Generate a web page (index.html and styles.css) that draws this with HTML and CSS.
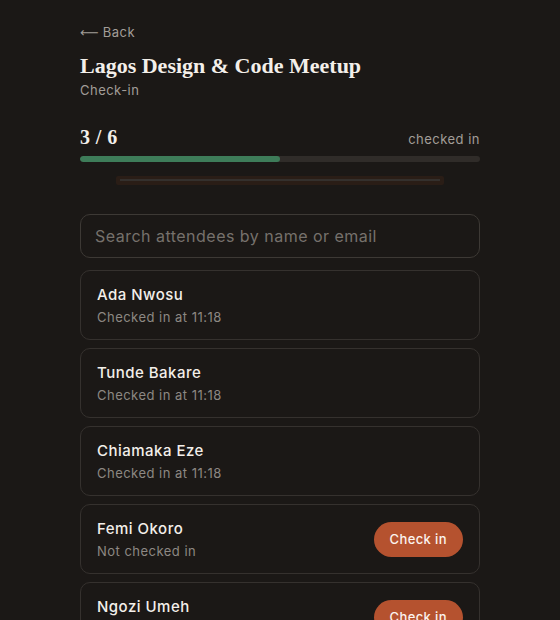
FILE: index.html
```html
<!DOCTYPE html>
<html lang="en">
<head>
  <meta charset="utf-8">
  <title>Check-in</title>
  <link rel="stylesheet" href="styles.css">
</head>
<body>
<main class="page">
  <a class="back" href="#"><span class="arrow">&#x27F5;</span> Back</a>
  <h1 class="title">Lagos Design &amp; Code Meetup</h1>
  <div class="subtitle">Check-in</div>

  <div class="progress-head">
    <span class="count">3 / 6</span>
    <span class="count-label">checked in</span>
  </div>
  <div class="track"><div class="fill" style="width: 50%"></div></div>
  <div class="ghost"><div class="ghost-line"></div></div>

  <input class="search" type="text" placeholder="Search attendees by name or email">

  <ul class="list">
    <li class="card">
      <div><div class="name">Ada Nwosu</div><div class="status">Checked in at 11:18</div></div>
    </li>
    <li class="card">
      <div><div class="name">Tunde Bakare</div><div class="status">Checked in at 11:18</div></div>
    </li>
    <li class="card">
      <div><div class="name">Chiamaka Eze</div><div class="status">Checked in at 11:18</div></div>
    </li>
    <li class="card">
      <div><div class="name">Femi Okoro</div><div class="status">Not checked in</div></div>
      <button class="btn">Check in</button>
    </li>
    <li class="card">
      <div><div class="name">Ngozi Umeh</div><div class="status">Not checked in</div></div>
      <button class="btn">Check in</button>
    </li>
    <li class="card">
      <div><div class="name">Segun Adeyemi</div><div class="status">Not checked in</div></div>
      <button class="btn">Check in</button>
    </li>
  </ul>
</main>
</body>
</html>
```

FILE: styles.css
```css
body {
    margin: 0;
    background-color: #1b1816;
    color: #f3efea;
    font-family: Inter, "Liberation Sans", sans-serif;
    letter-spacing: 0.03em;
}

.page {
    width: 400px;
    margin: 0 auto;
    padding-top: 21px;
}

.back {
    display: inline-block;
    color: #a29d98;
    font-size: 13px;
    line-height: 18px;
    text-decoration: none;
}

.back .arrow {
    font-family: "DejaVu Sans", sans-serif;
    letter-spacing: 0;
}

.title {
    margin: 11px 0 0;
    font-family: "Liberation Serif", serif;
    font-weight: bold;
    font-size: 22px;
    line-height: 26px;
    letter-spacing: 0;
}

.subtitle {
    margin-top: 2px;
    color: #a29d98;
    font-size: 13px;
    line-height: 18px;
}

.progress-head {
    margin-top: 25px;
    display: flex;
    justify-content: space-between;
    align-items: baseline;
}

.count {
    font-family: "Liberation Serif", serif;
    font-weight: bold;
    font-size: 20px;
    line-height: 26px;
    letter-spacing: 0.02em;
}

.count-label {
    color: #a29d98;
    font-size: 13px;
}

.track {
    margin-top: 6px;
    height: 6px;
    border-radius: 3px;
    background-color: #302c29;
    overflow: hidden;
}

.fill {
    height: 100%;
    border-radius: 3px;
    background-color: #3e7c59;
}

.ghost {
    margin: 14px 36px 0;
    height: 9px;
    padding: 3px 4px;
    box-sizing: border-box;
    background-color: #2a1d16;
    border-radius: 2px;
}

.ghost-line {
    height: 2px;
    background-color: #34302d;
}

.search {
    display: block;
    margin-top: 29px;
    width: 100%;
    height: 44px;
    box-sizing: border-box;
    padding: 0 14px;
    border: 1px solid #3d3935;
    border-radius: 10px;
    background-color: #1b1816;
    color: #f3efea;
    font-family: inherit;
    font-size: 16px;
    letter-spacing: 0.03em;
    outline: none;
}

.search::placeholder {
    color: #76716c;
}

.list {
    list-style: none;
    margin: 12px 0 0;
    padding: 0;
    display: flex;
    flex-direction: column;
    gap: 8px;
}

.card {
    height: 70px;
    box-sizing: border-box;
    padding: 0 16px;
    border: 1px solid #35312e;
    border-radius: 10px;
    display: flex;
    justify-content: space-between;
    align-items: center;
}

.name {
    font-size: 15px;
    font-weight: 500;
    line-height: 20px;
}

.status {
    margin-top: 3px;
    color: #8d8883;
    font-size: 13px;
    line-height: 18px;
}

.btn {
    height: 35px;
    padding: 0 16px;
    border: none;
    border-radius: 18px;
    background-color: #b5522f;
    color: #fbf3ee;
    font-family: inherit;
    font-size: 13px;
    font-weight: 500;
    letter-spacing: 0.03em;
}
```
